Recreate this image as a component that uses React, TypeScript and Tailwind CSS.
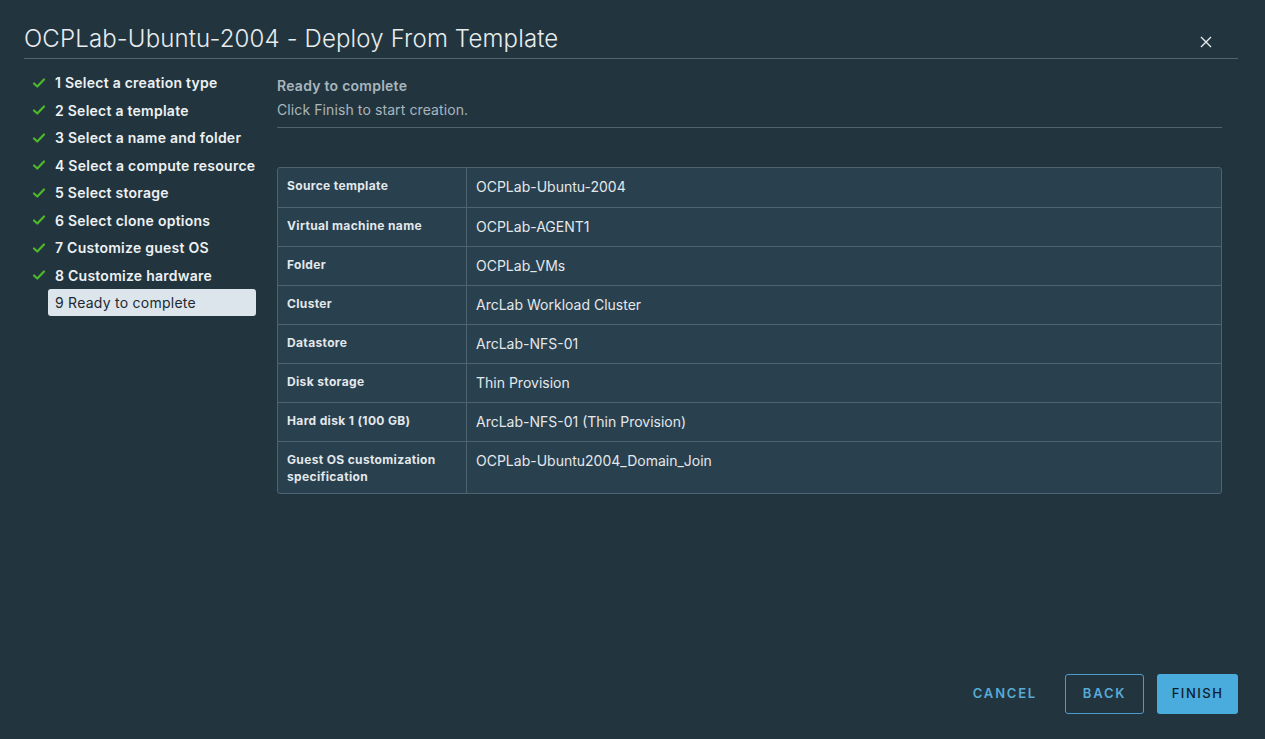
import React from "react";

const steps = [
  "1 Select a creation type",
  "2 Select a template",
  "3 Select a name and folder",
  "4 Select a compute resource",
  "5 Select storage",
  "6 Select clone options",
  "7 Customize guest OS",
  "8 Customize hardware",
];

const rows: [string, string][] = [
  ["Source template", "OCPLab-Ubuntu-2004"],
  ["Virtual machine name", "OCPLab-AGENT1"],
  ["Folder", "OCPLab_VMs"],
  ["Cluster", "ArcLab Workload Cluster"],
  ["Datastore", "ArcLab-NFS-01"],
  ["Disk storage", "Thin Provision"],
  ["Hard disk 1 (100 GB)", "ArcLab-NFS-01 (Thin Provision)"],
  ["Guest OS customization specification", "OCPLab-Ubuntu2004_Domain_Join"],
];

function Check() {
  return (
    <svg width="14" height="14" viewBox="0 0 14 14" className="shrink-0">
      <path d="M2 7.5 L5.3 10.5 L12 3.5" fill="none" stroke="#4fb82a" strokeWidth="2.2" strokeLinecap="round" strokeLinejoin="round" />
    </svg>
  );
}

export default function App() {
  return (
    <div
      className="w-[1265px] h-[739px] bg-[#22353f] text-[#e3e8eb] flex flex-col overflow-hidden"
      style={{ fontFamily: "Inter, 'Noto Sans', sans-serif" }}
    >
      <div className="ml-[24px] mr-[27px] h-[59px] flex items-end justify-between border-b border-[#526672] pb-[3px]">
        <h1 className="text-[24px] font-light text-[#e8ecee] leading-[32px] tracking-[0.15px]">
          OCPLab-Ubuntu-2004 - Deploy From Template
        </h1>
        <svg width="12" height="12" viewBox="0 0 12 12" className="mr-[26px] mb-[7px]">
          <path d="M1 1 L11 11 M11 1 L1 11" stroke="#e8ecee" strokeWidth="1.4" />
        </svg>
      </div>
      <div className="flex flex-1">
        <div className="w-[256px] pl-[32px] pt-[10px] shrink-0">
          {steps.map((s) => (
            <div key={s} className="h-[27.5px] flex items-center gap-[9px]">
              <Check />
              <span className="text-[14px] font-semibold text-[#eef1f3] tracking-[0.25px]">{s}</span>
            </div>
          ))}
          <div className="ml-[16px] mt-[0px] h-[27px] w-[208px] rounded-[3px] bg-[#dbe5eb] flex items-center pl-[7px] text-[14px] text-[#1b2a32] tracking-[0.25px]">
            9 Ready to complete
          </div>
        </div>
        <div className="flex-1 pl-[21px] pr-[43px] flex flex-col">
          <div className="pt-[17px] border-b border-[#4e6270] pb-[7px]">
            <div className="text-[14px] font-semibold text-[#a9b6bd] leading-[20px] tracking-[0.25px]">Ready to complete</div>
            <div className="text-[14px] text-[#a9b6bd] leading-[20px] mt-[4px] tracking-[0.1px]">Click Finish to start creation.</div>
          </div>
          <div className="mt-[39px] border border-[#4e6270] rounded-[3px] bg-[#29404f]">
            {rows.map(([k, v], i) => (
              <div
                key={k}
                className={`flex ${i > 0 ? "border-t border-[#4e6270]" : ""} ${i === rows.length - 1 ? "min-h-[52px]" : "h-[39px]"}`}
              >
                <div className="w-[189px] shrink-0 border-r border-[#4e6270] pl-[9px] pr-[8px] pt-[9px] text-[12px] font-bold text-[#e3e8eb] leading-[17px] tracking-[0.35px]">
                  {k}
                </div>
                <div className="pl-[9px] pt-[10px] text-[14px] text-[#e3e8eb] leading-[18px]">{v}</div>
              </div>
            ))}
          </div>
        </div>
      </div>
      <div className="h-[65px] flex items-start justify-end pr-[27px] gap-[13px]">
        <button className="h-[40px] pl-[15px] pr-[15px] text-[13px] font-semibold tracking-[1.8px] text-[#58aad6]">CANCEL</button>
        <button className="h-[40px] w-[79px] rounded-[3px] border border-[#4b9ccb] text-[13px] font-semibold tracking-[1.8px] text-[#58aad6]">BACK</button>
        <button className="h-[40px] w-[81px] rounded-[3px] bg-[#4aacdd] text-[13px] font-medium tracking-[1.5px] text-[#10202a]">FINISH</button>
      </div>
    </div>
  );
}
